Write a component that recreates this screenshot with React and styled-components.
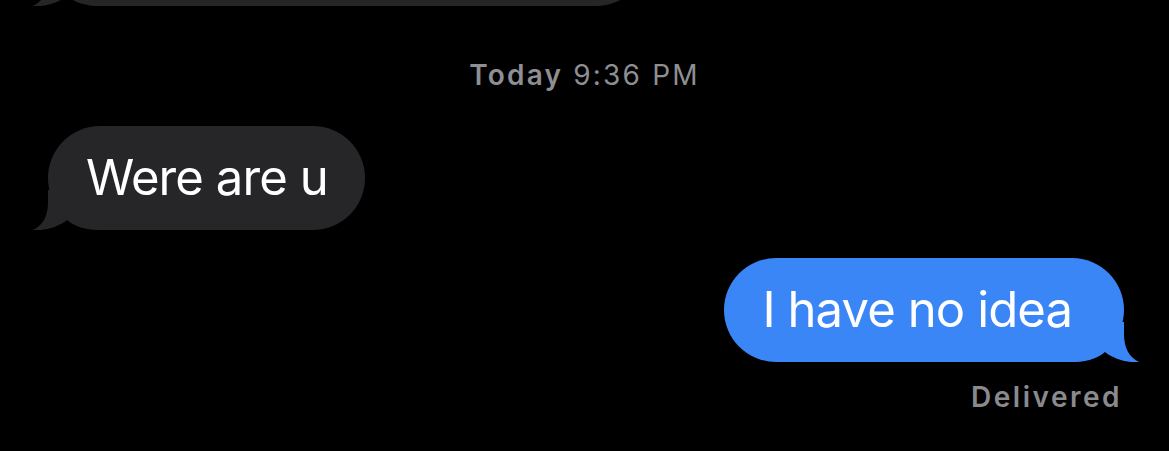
import React from "react";
import styled, { createGlobalStyle } from "styled-components";

const GlobalStyle = createGlobalStyle`
  html, body {
    margin: 0;
    padding: 0;
    background: #000;
  }
`;

const Screen = styled.div`
  width: 1169px;
  height: 451px;
  overflow: hidden;
  background: #000;
  display: flex;
  flex-direction: column;
  font-family: Inter, "Liberation Sans", sans-serif;
`;

const Row = styled.div`
  display: flex;
  justify-content: ${(p) => (p.$out ? "flex-end" : "flex-start")};
  padding: ${(p) => (p.$out ? "0 45px 0 0" : "0 0 0 48px")};
  margin-top: ${(p) => p.$gap || 0}px;
`;

const Bubble = styled.div`
  position: relative;
  box-sizing: border-box;
  height: 104px;
  padding: ${(p) => (p.$out ? "23px 52px 23px 38px" : "23px 37px 23px 38px")};
  border-radius: 52px;
  background: ${(p) => (p.$out ? "#3b86f7" : "#262629")};
  color: #fff;
  font-size: 49px;
  line-height: 58px;
  letter-spacing: -0.9px;
  white-space: nowrap;
`;

const Text = styled.span`
  position: relative;
  z-index: 1;
`;

const Clipped = styled(Bubble)`
  width: 600px;
  margin-top: -98px;
`;

const Tail = styled.svg`
  position: absolute;
  z-index: 0;
  bottom: 0;
  ${(p) => (p.$out ? "right: -15px; transform: scaleX(-1);" : "left: -15px;")}
  width: 67px;
  height: 40px;
`;

const Stamp = styled.div`
  margin-top: 52px;
  text-align: center;
  color: #8e8e93;
  font-size: 28px;
  line-height: 34px;
  letter-spacing: 2.2px;
  b {
    font-weight: 600;
  }
`;

const Status = styled.div`
  margin-top: 19px;
  padding-right: 47px;
  text-align: right;
  color: #8a8a8e;
  font-size: 28px;
  font-weight: 600;
  line-height: 32px;
  letter-spacing: 2.5px;
`;

const BubbleTail = ({ out }) => (
  <Tail $out={out} viewBox="0 0 67 40">
    <path
      d="M15,0 L15,12 C15,26 10,35 0,40 C10,41 24,38 34,30 C42,37 54,40 67,40 L67,0 Z"
      fill={out ? "#3b86f7" : "#262629"}
    />
  </Tail>
);

const App = () => (
  <Screen>
    <GlobalStyle />
    <Row>
      <Clipped>
        <BubbleTail />
      </Clipped>
    </Row>

    <Stamp>
      <b>Today</b> 9:36 PM
    </Stamp>

    <Row $gap={34}>
      <Bubble>
        <BubbleTail />
        <Text>Were are u</Text>
      </Bubble>
    </Row>

    <Row $out $gap={28}>
      <Bubble $out>
        <BubbleTail out />
        <Text>I have no idea</Text>
      </Bubble>
    </Row>

    <Status>Delivered</Status>
  </Screen>
);

export default App;
